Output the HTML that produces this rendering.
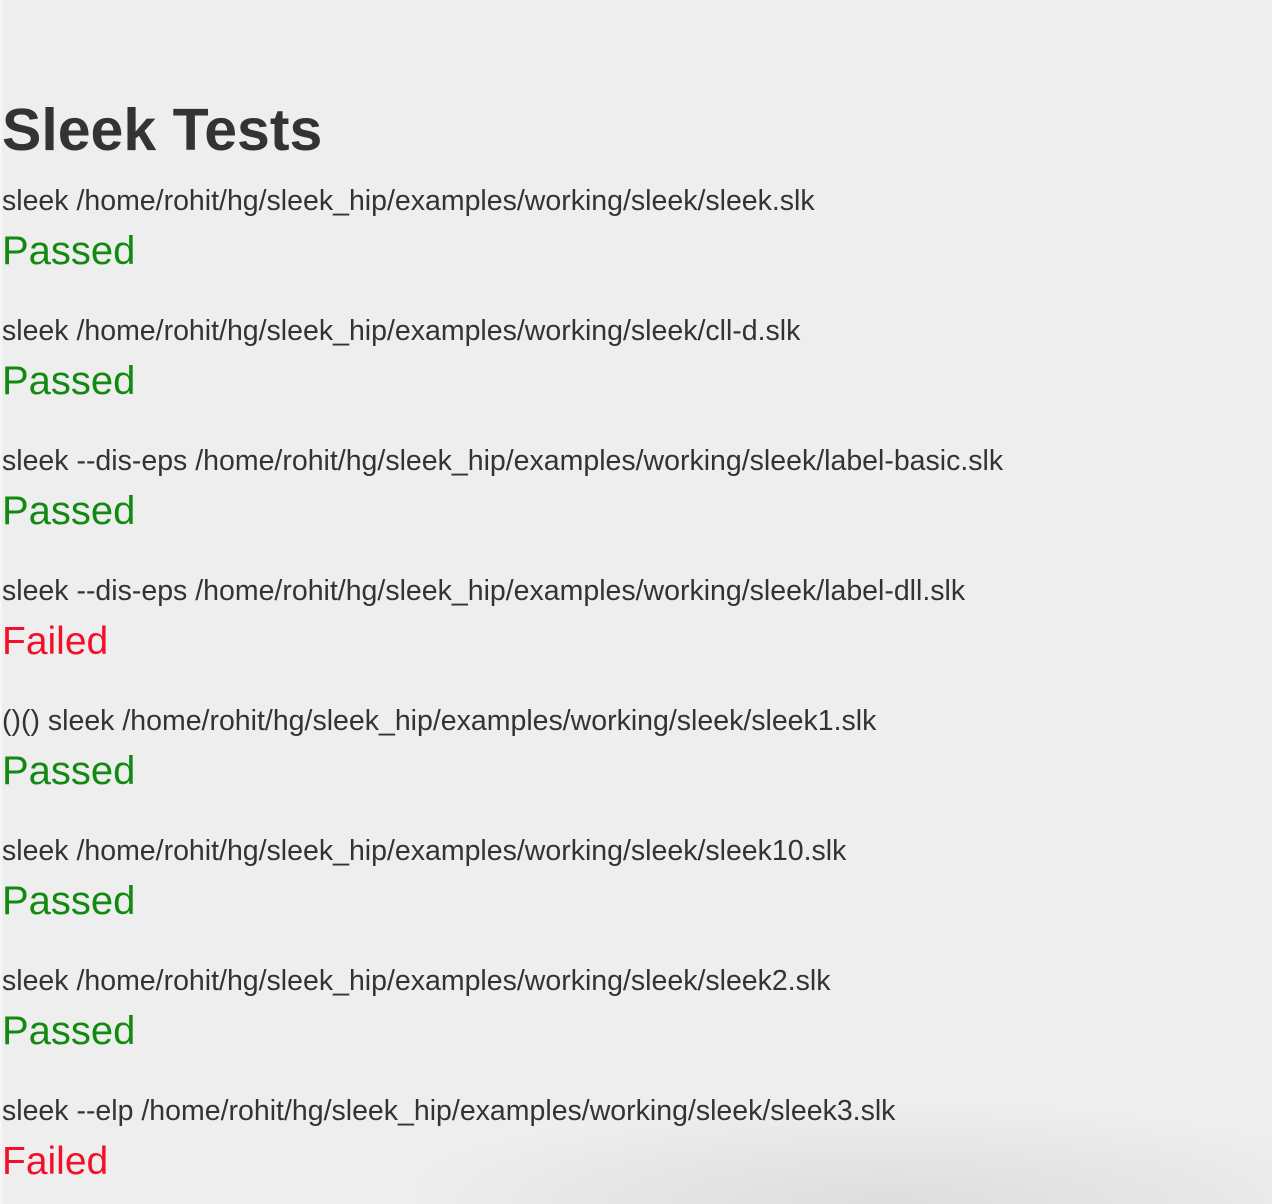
<!DOCTYPE html>
<html><head><meta charset="utf-8"><style>
html,body{margin:0;padding:0;width:1272px;height:1204px;overflow:hidden;background:#eeeeee;font-family:"Liberation Sans",Arial,sans-serif;position:relative;}
.sh{position:absolute;left:420px;top:1100px;width:852px;height:104px;background:radial-gradient(ellipse 60% 100% at 55% 100%,rgba(0,0,0,0.07),rgba(0,0,0,0) 100%);}
.edge{position:absolute;left:0;top:0;width:2px;height:1204px;background:#f6f6f6;}
div.t{position:absolute;left:2px;line-height:1;white-space:nowrap;}
.h{font-size:59px;font-weight:bold;color:#333;}
.c{font-size:28.5px;color:#333;}
.p{font-size:40px;color:#128a12;}
.f{font-size:39px;color:#f2102a;}
</style></head><body>
<div class="sh"></div><div class="edge"></div>
<div class="t h" style="top:101px">Sleek Tests</div>
<div class="t c" style="top:187px">sleek /home/rohit/hg/sleek_hip/examples/working/sleek/sleek.slk</div>
<div class="t p" style="top:231px">Passed</div>
<div class="t c" style="top:317px">sleek /home/rohit/hg/sleek_hip/examples/working/sleek/cll-d.slk</div>
<div class="t p" style="top:361px">Passed</div>
<div class="t c" style="top:447px">sleek --dis-eps /home/rohit/hg/sleek_hip/examples/working/sleek/label-basic.slk</div>
<div class="t p" style="top:491px">Passed</div>
<div class="t c" style="top:577px">sleek --dis-eps /home/rohit/hg/sleek_hip/examples/working/sleek/label-dll.slk</div>
<div class="t f" style="top:622px">Failed</div>
<div class="t c" style="top:707px">()() sleek /home/rohit/hg/sleek_hip/examples/working/sleek/sleek1.slk</div>
<div class="t p" style="top:751px">Passed</div>
<div class="t c" style="top:837px">sleek /home/rohit/hg/sleek_hip/examples/working/sleek/sleek10.slk</div>
<div class="t p" style="top:881px">Passed</div>
<div class="t c" style="top:967px">sleek /home/rohit/hg/sleek_hip/examples/working/sleek/sleek2.slk</div>
<div class="t p" style="top:1011px">Passed</div>
<div class="t c" style="top:1097px">sleek --elp /home/rohit/hg/sleek_hip/examples/working/sleek/sleek3.slk</div>
<div class="t f" style="top:1142px">Failed</div>
</body></html>
